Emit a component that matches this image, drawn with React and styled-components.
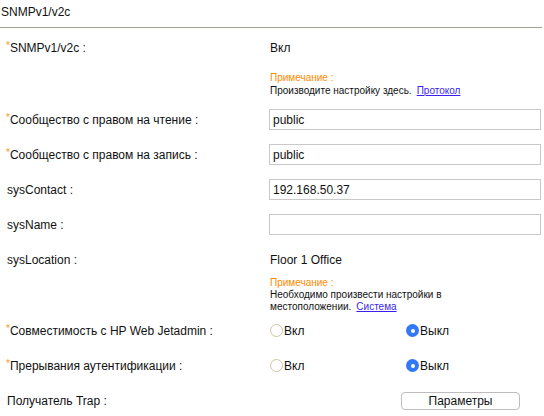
import React, { useState } from "react";
import styled, { createGlobalStyle } from "styled-components";

const GlobalStyle = createGlobalStyle`
  body {
    margin: 0;
    background: #ffffff;
    font-family: "Liberation Sans", Arial, sans-serif;
    color: #111;
  }
`;

const Page = styled.div`
  width: 542px;
`;

const Header = styled.div`
  height: 28px;
  padding-left: 1px;
  padding-top: 5px;
  box-sizing: border-box;
  font-size: 12px;
  line-height: 14px;
  border-bottom: 1px solid #a3a192;
`;

const Body = styled.div`
  padding-top: 2px;
`;

const Row = styled.div`
  display: flex;
  align-items: center;
  height: 35px;
`;

const Label = styled.div`
  width: 269px;
  flex-shrink: 0;
  box-sizing: border-box;
  padding-left: ${(p) => (p.required ? "6px" : "7px")};
  font-size: 12px;
`;

const Star = styled.span`
  color: #f39a1e;
  font-size: 10px;
  vertical-align: top;
  position: relative;
  top: -1px;
`;

const Value = styled.div`
  flex: 1;
  padding-left: 1px;
  font-size: 12px;
`;

const NoteRow = styled.div`
  display: flex;
  padding-top: ${(p) => p.top}px;
  padding-bottom: ${(p) => p.bottom}px;
`;

const NoteSpacer = styled.div`
  width: 270px;
  flex-shrink: 0;
`;

const Note = styled.div`
  width: 215px;
  font-size: 10px;
  line-height: ${(p) => p.lh}px;
`;

const NoteTitle = styled.div`
  color: #ff8a00;
`;

const NoteText = styled.span`
  display: inline-block;
  line-height: inherit;
`;

const NoteLink = styled.a`
  display: inline-block;
  line-height: inherit;
  color: #3a1fef;
  text-decoration: underline;
  margin-left: 5px;
  cursor: pointer;
`;

const TextInput = styled.input`
  width: 272px;
  height: 21px;
  box-sizing: border-box;
  border: 1px solid #c9c9c9;
  padding: 0 3px;
  font-family: inherit;
  font-size: 12px;
  color: #111;
  outline: none;
`;

const RadioGroup = styled.div`
  display: grid;
  grid-template-columns: 136px 136px;
  padding-left: 1px;
`;

const RadioLabel = styled.label`
  display: flex;
  align-items: center;
  font-size: 12px;
  cursor: pointer;
`;

const RadioDot = styled.input.attrs({ type: "radio" })`
  appearance: none;
  margin: 0 1px 0 0;
  width: 13px;
  height: 13px;
  border-radius: 50%;
  box-sizing: border-box;
  border: 1px solid #cdc4a4;
  background: #fff;
  position: relative;

  &:checked {
    border: none;
    background: #3478f6;
  }
  &:checked::after {
    content: "";
    position: absolute;
    left: 4.5px;
    top: 4.5px;
    width: 4px;
    height: 4px;
    border-radius: 50%;
    background: #fff;
  }
`;

const ParamsButton = styled.button`
  margin-left: 132px;
  width: 119px;
  height: 18px;
  border: 1px solid #bdbdbd;
  border-radius: 4px;
  background: #fff;
  font-family: inherit;
  font-size: 12px;
  color: #111;
  padding: 0;
`;

function FieldLabel({ required, children }) {
  return (
    <Label required={required}>
      {required && <Star>*</Star>}
      {children}
    </Label>
  );
}

function OnOff({ name, value, onChange }) {
  return (
    <RadioGroup>
      <RadioLabel>
        <RadioDot name={name} checked={value === "on"} onChange={() => onChange("on")} />
        Вкл
      </RadioLabel>
      <RadioLabel>
        <RadioDot name={name} checked={value === "off"} onChange={() => onChange("off")} />
        Выкл
      </RadioLabel>
    </RadioGroup>
  );
}

export default function App() {
  const [readCommunity, setReadCommunity] = useState("public");
  const [writeCommunity, setWriteCommunity] = useState("public");
  const [contact, setContact] = useState("192.168.50.37");
  const [sysName, setSysName] = useState("");
  const [jetadmin, setJetadmin] = useState("off");
  const [authTrap, setAuthTrap] = useState("off");

  return (
    <Page>
      <GlobalStyle />
      <Header>SNMPv1/v2c</Header>
      <Body>
        <Row>
          <FieldLabel required>SNMPv1/v2c :</FieldLabel>
          <Value>Вкл</Value>
        </Row>
        <NoteRow top={7} bottom={5}>
          <NoteSpacer />
          <Note lh={12.5}>
            <NoteTitle>Примечание :</NoteTitle>
            <NoteText>Производите настройку здесь.</NoteText>
            <NoteLink>Протокол</NoteLink>
          </Note>
        </NoteRow>
        <Row>
          <FieldLabel required>Сообщество с правом на чтение :</FieldLabel>
          <TextInput value={readCommunity} onChange={(e) => setReadCommunity(e.target.value)} />
        </Row>
        <Row>
          <FieldLabel required>Сообщество с правом на запись :</FieldLabel>
          <TextInput value={writeCommunity} onChange={(e) => setWriteCommunity(e.target.value)} />
        </Row>
        <Row>
          <FieldLabel>sysContact :</FieldLabel>
          <TextInput value={contact} onChange={(e) => setContact(e.target.value)} />
        </Row>
        <Row>
          <FieldLabel>sysName :</FieldLabel>
          <TextInput value={sysName} onChange={(e) => setSysName(e.target.value)} />
        </Row>
        <Row>
          <FieldLabel>sysLocation :</FieldLabel>
          <Value>Floor 1 Office</Value>
        </Row>
        <NoteRow top={0} bottom={0}>
          <NoteSpacer />
          <Note lh={12}>
            <NoteTitle>Примечание :</NoteTitle>
            <NoteText>Необходимо произвести настройки в</NoteText>
            <NoteText>местоположении.</NoteText>
            <NoteLink>Система</NoteLink>
          </Note>
        </NoteRow>
        <Row>
          <FieldLabel required>Совместимость с HP Web Jetadmin :</FieldLabel>
          <OnOff name="jetadmin" value={jetadmin} onChange={setJetadmin} />
        </Row>
        <Row>
          <FieldLabel required>Прерывания аутентификации :</FieldLabel>
          <OnOff name="authtrap" value={authTrap} onChange={setAuthTrap} />
        </Row>
        <Row>
          <FieldLabel>Получатель Trap :</FieldLabel>
          <ParamsButton>Параметры</ParamsButton>
        </Row>
      </Body>
    </Page>
  );
}
